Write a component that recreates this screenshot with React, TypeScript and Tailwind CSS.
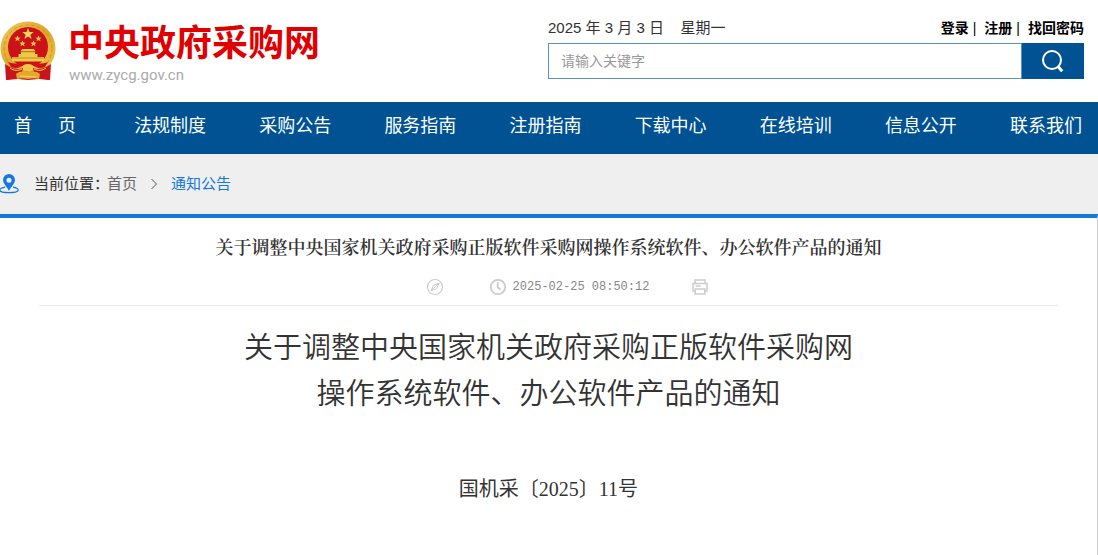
const navItems = [
  "法规制度",
  "采购公告",
  "服务指南",
  "注册指南",
  "下载中心",
  "在线培训",
  "信息公开",
  "联系我们",
];

export default function App() {
  return (
    <div className="min-h-screen flex flex-col bg-white text-[#333] font-['Liberation_Sans','Noto_Sans_CJK_SC',sans-serif]">
      <Header />
      <Nav />
      <Breadcrumb />
      <Article />
    </div>
  );
}

function Header() {
  return (
    <header className="flex justify-between pr-[14px] pt-4 pb-[19px]">
      <a href="#" className="flex items-start pt-[5px]">
        <Emblem />
        <span className="flex flex-col pl-[10px]">
          <span className="text-[36px] leading-[46px] font-bold text-[#e00000]">中央政府采购网</span>
          <span className="pl-px text-[15px] leading-4 text-[#aaa] font-[Roboto,sans-serif]">www.zycg.gov.cn</span>
        </span>
      </a>
      <div className="w-[536px]">
        <div className="flex justify-between items-center h-[27px] pb-[3px]">
          <span className="text-[15px] whitespace-pre">2025 年 3 月 3 日    星期一</span>
          <span className="flex text-sm font-bold text-black">
            <a href="#">登录</a>
            <span className="pl-1 pr-2 font-normal">|</span>
            <a href="#">注册</a>
            <span className="pl-1 pr-2 font-normal">|</span>
            <a href="#">找回密码</a>
          </span>
        </div>
        <form className="flex h-9" onSubmit={(e) => e.preventDefault()}>
          <input
            type="text"
            aria-label="搜索"
            placeholder="请输入关键字"
            className="flex-1 min-w-0 border border-[#5893c8] px-3 text-sm placeholder:text-[#999] outline-none"
          />
          <button type="submit" aria-label="搜索" className="w-[62px] bg-[#005293] flex items-center justify-center">
            <svg width="24" height="24" viewBox="0 0 24 24" fill="none" stroke="#fff">
              <circle cx="11" cy="11" r="9" strokeWidth="2" />
              <path d="M16.8 17.2l4.400 5" strokeWidth="3" />
            </svg>
          </button>
        </form>
      </div>
    </header>
  );
}

function Nav() {
  return (
    <nav className="bg-[#005293] h-[52px] pl-[9px] pr-4 pb-1 flex items-center justify-between text-lg text-white">
      <a href="#" className="w-[72px] flex justify-between px-[5px]">
        <span>首</span>
        <span>页</span>
      </a>
      {navItems.map((item) => (
        <a key={item} href="#" className="whitespace-nowrap">
          {item}
        </a>
      ))}
    </nav>
  );
}

function Breadcrumb() {
  return (
    <div className="bg-[#efefef] h-[60px] flex items-center text-[15px]">
      <svg width="20" height="20" viewBox="0 0 20 20" fill="none">
        <path d="M5.2 13.2C1.8 13.8-.2 14.9-.2 16.1c0 1.6 4 2.6 9.2 2.6s9.3-1 9.3-2.6c0-1.2-2-2.3-5.4-2.9" stroke="#1478e0" strokeWidth="1.3" />
        <path
          d="M9 0a6 6 0 0 0-6 6c0 3.6 4.6 7.4 6 11 1.400-3.600 6-7.400 6-11a6 6 0 0 0-6-6zm0 3.700a2.500 2.500 0 1 1 0 5 2.500 2.500 0 0 1 0-5z"
          fill="#1478e0"
        />
      </svg>
      <span className="pl-[14px]">当前位置：</span>
      <a href="#" className="text-[#666] -ml-[2px]">首页</a>
      <svg className="mx-3" width="10" height="12" viewBox="0 0 10 12" fill="none" stroke="#555">
        <path d="M2.500 1l5 5-5 5" />
      </svg>
      <a href="#" className="text-[#1478e0]">通知公告</a>
    </div>
  );
}

function Article() {
  return (
    <main className="flex-1 border-t-4 border-t-[#1478e0] border-r border-r-[#ccc] px-[39px] pt-4 text-center">
      <h1 className="text-lg leading-6 font-semibold text-[#333] font-['Noto_Serif_CJK_SC','Noto_Sans_CJK_SC',serif]">
        关于调整中央国家机关政府采购正版软件采购网操作系统软件、办公软件产品的通知
      </h1>
      <div className="flex items-center justify-center h-12 border-b border-[#e8e8e8] text-xs text-[#888] pb-[2px] pt-3 pl-[38px]">
        <svg width="18" height="18" viewBox="0 0 18 18" fill="none" stroke="#ccc">
          <circle cx="9" cy="9" r="7.500" strokeWidth="1.200" />
          <path d="M13 5L7.300 7.500 5 13l5.700-2.500z" />
          <path d="M12.500 5.500L5.500 12.500" />
        </svg>
        <svg className="ml-[45px] mr-[6px]" width="18" height="18" viewBox="0 0 18 18" fill="none" stroke="#ccc" strokeWidth="1.800">
          <circle cx="9" cy="9" r="7.200" />
          <path d="M8.700 4v5.300l2.800 2.200" />
        </svg>
        <time className="font-['Liberation_Mono',monospace]">2025-02-25 08:50:12</time>
        <button type="button" aria-label="打印" className="ml-[42px]">
          <svg width="18" height="18" viewBox="0 0 18 18" fill="none" stroke="#ccc" strokeWidth="1.500">
            <path d="M4 5V2h10v3M4 13H2V5.500h14V13h-2" />
            <path d="M4.200 11h9.600v5H4.200zM4.500 8h5" />
          </svg>
        </button>
      </div>
      <h2 className="pt-[19px] text-[29px] leading-[46px] font-[350]">
        关于调整中央国家机关政府采购正版软件采购网
        <br />
        操作系统软件、办公软件产品的通知
      </h2>
      <p className="pt-[57px] text-xl leading-[30px] font-['Liberation_Serif','Noto_Sans_CJK_SC',serif]">
        国机采〔2025〕11号
      </p>
    </main>
  );
}

function Emblem() {
  return (
    <svg width="58" height="62" viewBox="0 0 58 62" aria-hidden="true">
      <defs>
        <linearGradient id="gold" x1="0" y1="0" x2="1" y2="1">
          <stop offset="0" stopColor="#f3cc58" />
          <stop offset="0.500" stopColor="#dea42c" />
          <stop offset="1" stopColor="#f0c848" />
        </linearGradient>
      </defs>
      <path d="M8 42l-2 17 12-1 10 1 11-1 10 1-1-17z" fill="#c8141a" />
      <ellipse cx="28" cy="27.500" rx="27.500" ry="27" fill="url(#gold)" />
      <ellipse cx="28" cy="27.500" rx="24" ry="23.500" fill="none" stroke="#c98a1c" strokeWidth="0.800" strokeDasharray="4 2" />
      <circle cx="28" cy="26" r="20" fill="#cb1218" />
      <path d="M28 7l1.500 4h4.300l-3.400 2.700 1.200 4.200-3.600-2.500-3.600 2.500 1.200-4.200L22.200 11h4.300z" fill="#f8d558" />
      <g fill="#f0c848">
        <path d="M17.500 14.500l.9 2.100 2.200.1-1.700 1.400.6 2.200-2-1.200-2 1.200.6-2.200-1.700-1.400 2.200-.1z" />
        <path d="M38.500 14.500l.9 2.100 2.200.1-1.700 1.400.6 2.200-2-1.200-2 1.200.6-2.200-1.700-1.400 2.200-.1z" />
        <path d="M22.500 19.500l.9 2.100 2.200.1-1.700 1.400.6 2.200-2-1.200-2 1.200.6-2.200-1.700-1.400 2.200-.1z" />
        <path d="M33.500 19.500l.9 2.100 2.200.1-1.700 1.400.6 2.200-2-1.200-2 1.200.6-2.200-1.700-1.400 2.200-.1z" />
        <path d="M22 28h12l1.500 2.500h-15zM21 31h14v3H21zM18.500 33h19v3h-19z" />
        <path d="M12 36h32v4.500H12z" />
      </g>
      <path d="M12 37h32M20.500 30.800h15" stroke="#b57a16" strokeWidth="0.700" />
      <path d="M8 41c7 3 14 1 20 .5 6 .5 13 2.500 20-.5l-3 5c-4 2-8 1-11-1l-6 1-6-1c-3 2-7 3-11 1z" fill="#cb1218" />
      <ellipse cx="28" cy="46.500" rx="6" ry="3.500" fill="#f0c848" />
      <path d="M5 43c7 5 13 6 18 4l-1 4c-3 3-6 3-9 2l-1 5-6 1zM51 43c-7 5-13 6-18 4l1 4c3 3 6 3 9 2l1 5 6 1z" fill="#c8141a" />
      <path d="M16 53c4-3 8-3 12-1 4-2 8-2 12 1l-1 5c-4-1-7-1-11 0-4-1-7-1-11 0z" fill="#e2a92c" />
      <path d="M20 55l16 1M10 47c4 3 8 3 12 1M46 47c-4 3-8 3-12 1" fill="none" stroke="#f6d365" />
    </svg>
  );
}
